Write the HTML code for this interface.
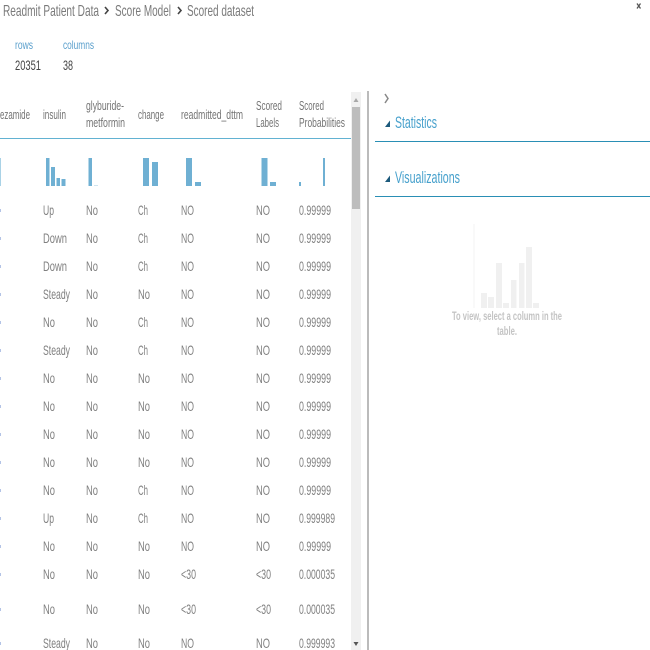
<!DOCTYPE html>
<html><head><meta charset="utf-8"><style>
html,body{margin:0;padding:0;background:#fff;width:650px;height:650px;overflow:hidden}
svg{display:block}
text{font-family:"Liberation Sans",sans-serif}
.c{font-size:14px;fill:#808080}
.h{font-size:13px;fill:#747474}
.b{font-size:16px;fill:#7a7a7a}
.bar{fill:#6fb0d3}
.g{fill:#f0f0f0}
</style></head><body>
<svg width="650" height="650" viewBox="0 0 650 650" xmlns="http://www.w3.org/2000/svg">
<!-- breadcrumb -->
<text class="b" x="3" y="16" textLength="96" lengthAdjust="spacingAndGlyphs">Readmit Patient Data</text>
<path d="M105 7l3 3.500-3 3.500" fill="none" stroke="#444" stroke-width="1.600"/>
<text class="b" x="115" y="16" textLength="56" lengthAdjust="spacingAndGlyphs">Score Model</text>
<path d="M178 7l3 3.500-3 3.500" fill="none" stroke="#444" stroke-width="1.600"/>
<text class="b" x="187" y="16" textLength="67" lengthAdjust="spacingAndGlyphs">Scored dataset</text>
<path d="M637 3.500l3.500 5M640.500 3.500l-3.500 5" stroke="#555" stroke-width="1.300"/>
<!-- stats -->
<text x="15" y="49" font-size="12" fill="#5a9fcc" textLength="18" lengthAdjust="spacingAndGlyphs">rows</text>
<text x="63" y="49" font-size="12" fill="#5a9fcc" textLength="31" lengthAdjust="spacingAndGlyphs">columns</text>
<text x="15" y="70" font-size="14" fill="#444" textLength="26" lengthAdjust="spacingAndGlyphs">20351</text>
<text x="63" y="70" font-size="14" fill="#444" textLength="10" lengthAdjust="spacingAndGlyphs">38</text>
<!-- table header -->
<text class="h" x="0" y="119" textLength="30" lengthAdjust="spacingAndGlyphs">ezamide</text>
<text class="h" x="43" y="119" textLength="23" lengthAdjust="spacingAndGlyphs">insulin</text>
<text class="h" x="86" y="110" textLength="38" lengthAdjust="spacingAndGlyphs">glyburide-</text>
<text class="h" x="86" y="127" textLength="39" lengthAdjust="spacingAndGlyphs">metformin</text>
<text class="h" x="138" y="119" textLength="26" lengthAdjust="spacingAndGlyphs">change</text>
<text class="h" x="181" y="119" textLength="62" lengthAdjust="spacingAndGlyphs">readmitted_dttm</text>
<text class="h" x="256" y="110" textLength="26" lengthAdjust="spacingAndGlyphs">Scored</text>
<text class="h" x="256" y="127" textLength="23" lengthAdjust="spacingAndGlyphs">Labels</text>
<text class="h" x="299" y="110" textLength="25" lengthAdjust="spacingAndGlyphs">Scored</text>
<text class="h" x="299" y="127" textLength="46" lengthAdjust="spacingAndGlyphs">Probabilities</text>
<rect x="0" y="138" width="351" height="1" fill="#62b2d2"/>
<!-- histograms -->
<rect x="0" y="158" width="1" height="28" fill="#a9d2e6"/>
<rect class="bar" x="46" y="158" width="3.500" height="28"/>
<rect class="bar" x="51" y="167" width="4" height="19"/>
<rect class="bar" x="56.500" y="178" width="3.500" height="8"/>
<rect class="bar" x="61.500" y="179" width="4" height="7"/>
<rect class="bar" x="88.500" y="158" width="3.500" height="28"/>
<rect x="94" y="185" width="4" height="1" fill="#cfe4ef"/>
<rect class="bar" x="143" y="158" width="6" height="28"/>
<rect class="bar" x="152" y="162" width="6" height="24"/>
<rect class="bar" x="186" y="158" width="6" height="28"/>
<rect class="bar" x="195" y="182" width="6" height="4"/>
<rect class="bar" x="261.500" y="158" width="6" height="28"/>
<rect class="bar" x="270" y="182" width="6" height="4"/>
<rect class="bar" x="299" y="182" width="2" height="4"/>
<rect class="bar" x="323" y="158" width="2" height="28"/>
<!-- rows -->
<g class="c" id="rows">
<text x="43" y="215" textLength="11" lengthAdjust="spacingAndGlyphs">Up</text><text x="86" y="215" textLength="12" lengthAdjust="spacingAndGlyphs">No</text><text x="138" y="215" textLength="10" lengthAdjust="spacingAndGlyphs">Ch</text><text x="181" y="215" textLength="13" lengthAdjust="spacingAndGlyphs">NO</text><text x="256" y="215" textLength="14" lengthAdjust="spacingAndGlyphs">NO</text><text x="299" y="215" textLength="32" lengthAdjust="spacingAndGlyphs">0.99999</text>
<text x="43" y="243" textLength="24" lengthAdjust="spacingAndGlyphs">Down</text><text x="86" y="243" textLength="12" lengthAdjust="spacingAndGlyphs">No</text><text x="138" y="243" textLength="10" lengthAdjust="spacingAndGlyphs">Ch</text><text x="181" y="243" textLength="13" lengthAdjust="spacingAndGlyphs">NO</text><text x="256" y="243" textLength="14" lengthAdjust="spacingAndGlyphs">NO</text><text x="299" y="243" textLength="32" lengthAdjust="spacingAndGlyphs">0.99999</text>
<text x="43" y="271" textLength="24" lengthAdjust="spacingAndGlyphs">Down</text><text x="86" y="271" textLength="12" lengthAdjust="spacingAndGlyphs">No</text><text x="138" y="271" textLength="10" lengthAdjust="spacingAndGlyphs">Ch</text><text x="181" y="271" textLength="13" lengthAdjust="spacingAndGlyphs">NO</text><text x="256" y="271" textLength="14" lengthAdjust="spacingAndGlyphs">NO</text><text x="299" y="271" textLength="32" lengthAdjust="spacingAndGlyphs">0.99999</text>
<text x="43" y="299" textLength="27" lengthAdjust="spacingAndGlyphs">Steady</text><text x="86" y="299" textLength="12" lengthAdjust="spacingAndGlyphs">No</text><text x="138" y="299" textLength="12" lengthAdjust="spacingAndGlyphs">No</text><text x="181" y="299" textLength="13" lengthAdjust="spacingAndGlyphs">NO</text><text x="256" y="299" textLength="14" lengthAdjust="spacingAndGlyphs">NO</text><text x="299" y="299" textLength="32" lengthAdjust="spacingAndGlyphs">0.99999</text>
<text x="43" y="327" textLength="12" lengthAdjust="spacingAndGlyphs">No</text><text x="86" y="327" textLength="12" lengthAdjust="spacingAndGlyphs">No</text><text x="138" y="327" textLength="10" lengthAdjust="spacingAndGlyphs">Ch</text><text x="181" y="327" textLength="13" lengthAdjust="spacingAndGlyphs">NO</text><text x="256" y="327" textLength="14" lengthAdjust="spacingAndGlyphs">NO</text><text x="299" y="327" textLength="32" lengthAdjust="spacingAndGlyphs">0.99999</text>
<text x="43" y="355" textLength="27" lengthAdjust="spacingAndGlyphs">Steady</text><text x="86" y="355" textLength="12" lengthAdjust="spacingAndGlyphs">No</text><text x="138" y="355" textLength="10" lengthAdjust="spacingAndGlyphs">Ch</text><text x="181" y="355" textLength="13" lengthAdjust="spacingAndGlyphs">NO</text><text x="256" y="355" textLength="14" lengthAdjust="spacingAndGlyphs">NO</text><text x="299" y="355" textLength="32" lengthAdjust="spacingAndGlyphs">0.99999</text>
<text x="43" y="383" textLength="12" lengthAdjust="spacingAndGlyphs">No</text><text x="86" y="383" textLength="12" lengthAdjust="spacingAndGlyphs">No</text><text x="138" y="383" textLength="12" lengthAdjust="spacingAndGlyphs">No</text><text x="181" y="383" textLength="13" lengthAdjust="spacingAndGlyphs">NO</text><text x="256" y="383" textLength="14" lengthAdjust="spacingAndGlyphs">NO</text><text x="299" y="383" textLength="32" lengthAdjust="spacingAndGlyphs">0.99999</text>
<text x="43" y="411" textLength="12" lengthAdjust="spacingAndGlyphs">No</text><text x="86" y="411" textLength="12" lengthAdjust="spacingAndGlyphs">No</text><text x="138" y="411" textLength="12" lengthAdjust="spacingAndGlyphs">No</text><text x="181" y="411" textLength="13" lengthAdjust="spacingAndGlyphs">NO</text><text x="256" y="411" textLength="14" lengthAdjust="spacingAndGlyphs">NO</text><text x="299" y="411" textLength="32" lengthAdjust="spacingAndGlyphs">0.99999</text>
<text x="43" y="439" textLength="12" lengthAdjust="spacingAndGlyphs">No</text><text x="86" y="439" textLength="12" lengthAdjust="spacingAndGlyphs">No</text><text x="138" y="439" textLength="12" lengthAdjust="spacingAndGlyphs">No</text><text x="181" y="439" textLength="13" lengthAdjust="spacingAndGlyphs">NO</text><text x="256" y="439" textLength="14" lengthAdjust="spacingAndGlyphs">NO</text><text x="299" y="439" textLength="32" lengthAdjust="spacingAndGlyphs">0.99999</text>
<text x="43" y="467" textLength="12" lengthAdjust="spacingAndGlyphs">No</text><text x="86" y="467" textLength="12" lengthAdjust="spacingAndGlyphs">No</text><text x="138" y="467" textLength="12" lengthAdjust="spacingAndGlyphs">No</text><text x="181" y="467" textLength="13" lengthAdjust="spacingAndGlyphs">NO</text><text x="256" y="467" textLength="14" lengthAdjust="spacingAndGlyphs">NO</text><text x="299" y="467" textLength="32" lengthAdjust="spacingAndGlyphs">0.99999</text>
<text x="43" y="495" textLength="12" lengthAdjust="spacingAndGlyphs">No</text><text x="86" y="495" textLength="12" lengthAdjust="spacingAndGlyphs">No</text><text x="138" y="495" textLength="10" lengthAdjust="spacingAndGlyphs">Ch</text><text x="181" y="495" textLength="13" lengthAdjust="spacingAndGlyphs">NO</text><text x="256" y="495" textLength="14" lengthAdjust="spacingAndGlyphs">NO</text><text x="299" y="495" textLength="32" lengthAdjust="spacingAndGlyphs">0.99999</text>
<text x="43" y="523" textLength="11" lengthAdjust="spacingAndGlyphs">Up</text><text x="86" y="523" textLength="12" lengthAdjust="spacingAndGlyphs">No</text><text x="138" y="523" textLength="10" lengthAdjust="spacingAndGlyphs">Ch</text><text x="181" y="523" textLength="13" lengthAdjust="spacingAndGlyphs">NO</text><text x="256" y="523" textLength="14" lengthAdjust="spacingAndGlyphs">NO</text><text x="299" y="523" textLength="36" lengthAdjust="spacingAndGlyphs">0.999989</text>
<text x="43" y="551" textLength="12" lengthAdjust="spacingAndGlyphs">No</text><text x="86" y="551" textLength="12" lengthAdjust="spacingAndGlyphs">No</text><text x="138" y="551" textLength="12" lengthAdjust="spacingAndGlyphs">No</text><text x="181" y="551" textLength="13" lengthAdjust="spacingAndGlyphs">NO</text><text x="256" y="551" textLength="14" lengthAdjust="spacingAndGlyphs">NO</text><text x="299" y="551" textLength="32" lengthAdjust="spacingAndGlyphs">0.99999</text>
<text x="43" y="579" textLength="12" lengthAdjust="spacingAndGlyphs">No</text><text x="86" y="579" textLength="12" lengthAdjust="spacingAndGlyphs">No</text><text x="138" y="579" textLength="12" lengthAdjust="spacingAndGlyphs">No</text><text x="181" y="579" textLength="15" lengthAdjust="spacingAndGlyphs">&lt;30</text><text x="256" y="579" textLength="15" lengthAdjust="spacingAndGlyphs">&lt;30</text><text x="299" y="579" textLength="36" lengthAdjust="spacingAndGlyphs">0.000035</text>
<text x="43" y="614" textLength="12" lengthAdjust="spacingAndGlyphs">No</text><text x="86" y="614" textLength="12" lengthAdjust="spacingAndGlyphs">No</text><text x="138" y="614" textLength="12" lengthAdjust="spacingAndGlyphs">No</text><text x="181" y="614" textLength="15" lengthAdjust="spacingAndGlyphs">&lt;30</text><text x="256" y="614" textLength="15" lengthAdjust="spacingAndGlyphs">&lt;30</text><text x="299" y="614" textLength="36" lengthAdjust="spacingAndGlyphs">0.000035</text>
<text x="43" y="648" textLength="27" lengthAdjust="spacingAndGlyphs">Steady</text><text x="86" y="648" textLength="12" lengthAdjust="spacingAndGlyphs">No</text><text x="138" y="648" textLength="12" lengthAdjust="spacingAndGlyphs">No</text><text x="181" y="648" textLength="13" lengthAdjust="spacingAndGlyphs">NO</text><text x="256" y="648" textLength="14" lengthAdjust="spacingAndGlyphs">NO</text><text x="299" y="648" textLength="36" lengthAdjust="spacingAndGlyphs">0.999993</text>
</g>
<!-- clipped column -->
<g fill="#b4c4e6">
<rect x="0" y="209" width="1" height="3"/><rect x="0" y="237" width="1" height="3"/><rect x="0" y="265" width="1" height="3"/><rect x="0" y="293" width="1" height="3"/><rect x="0" y="321" width="1" height="3"/><rect x="0" y="349" width="1" height="3"/><rect x="0" y="377" width="1" height="3"/><rect x="0" y="405" width="1" height="3"/><rect x="0" y="433" width="1" height="3"/><rect x="0" y="461" width="1" height="3"/><rect x="0" y="489" width="1" height="3"/><rect x="0" y="517" width="1" height="3"/><rect x="0" y="545" width="1" height="3"/><rect x="0" y="573" width="1" height="3"/><rect x="0" y="608" width="1" height="3"/><rect x="0" y="642" width="1" height="3"/>
</g>
<!-- scrollbar -->
<rect x="351" y="92" width="10" height="558" fill="#f0f0f0"/>
<rect x="352" y="107" width="8" height="102" fill="#bdbdbd"/>
<path d="M356 98l2.500 4h-5z" fill="#a8a8a8"/>
<path d="M356 646l-2.500-4h5z" fill="#555"/>
<!-- divider -->
<rect x="367" y="91" width="2" height="559" fill="#bbb"/>
<!-- right panel -->
<path d="M385 94l3 4.500-3 4.500" fill="none" stroke="#888" stroke-width="1.500"/>
<path d="M385 127l5-6.500v6.500z" fill="#1d5a7c"/>
<text x="395" y="128" font-size="17" fill="#46a0cc" textLength="42" lengthAdjust="spacingAndGlyphs">Statistics</text>
<rect x="375" y="141" width="275" height="1" fill="#2a8fb5"/>
<path d="M385 182l5-6.500v6.500z" fill="#1d5a7c"/>
<text x="395" y="183" font-size="17" fill="#46a0cc" textLength="65" lengthAdjust="spacingAndGlyphs">Visualizations</text>
<rect x="375" y="196" width="275" height="1" fill="#2a8fb5"/>
<!-- ghost chart -->
<rect x="473.500" y="224" width="1" height="84" fill="#f3f3f3"/>
<rect class="g" x="481" y="293" width="6" height="15"/>
<rect class="g" x="488" y="297" width="6" height="11"/>
<rect class="g" x="496" y="263" width="6" height="45"/>
<rect class="g" x="503" y="303" width="6" height="5"/>
<rect class="g" x="511" y="280" width="5.500" height="28"/>
<rect class="g" x="519" y="263" width="5.500" height="45"/>
<rect class="g" x="526" y="247" width="6" height="61"/>
<rect class="g" x="533" y="303" width="6" height="5"/>
<text x="452" y="320" font-size="12" font-weight="bold" fill="#c4c4c4" textLength="110" lengthAdjust="spacingAndGlyphs">To view, select a column in the</text>
<text x="497" y="335" font-size="12" font-weight="bold" fill="#c4c4c4" textLength="20" lengthAdjust="spacingAndGlyphs">table.</text>
</svg>
</body></html>
